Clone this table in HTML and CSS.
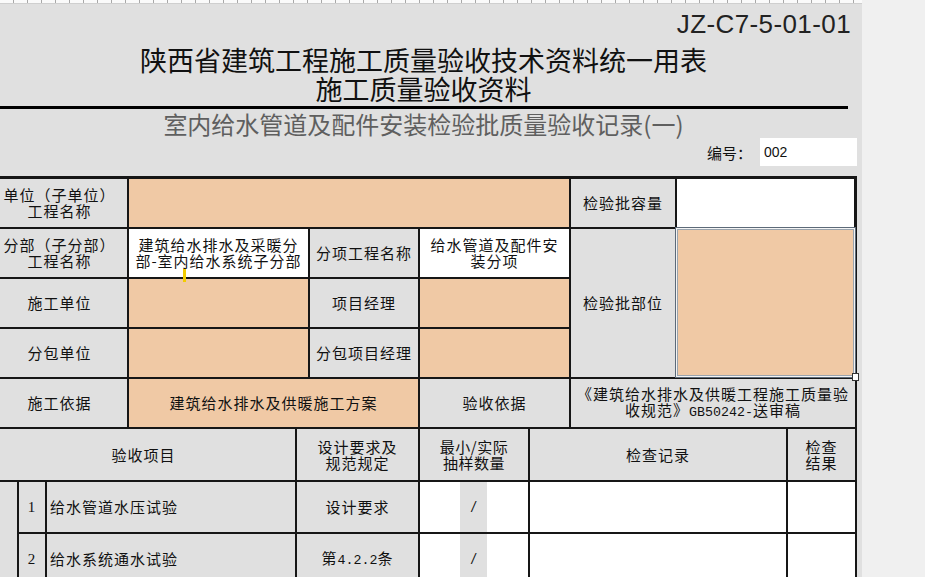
FILE: index.html
```html
<!DOCTYPE html>
<html lang="zh">
<head>
<meta charset="utf-8">
<title>室内给水管道及配件安装检验批质量验收记录</title>
<link rel="stylesheet" href="styles.css">
</head>
<body>
<div class="sheet">
  <div class="ruler"></div>
  <div class="head">
    <div class="code">JZ-C7-5-01-01</div>
    <div class="title"><div class="tl">陕西省建筑工程施工质量验收技术资料统一用表</div><div class="tl">施工质量验收资料</div></div>
    <div class="rule"></div>
    <div class="sub">室内给水管道及配件安装检验批质量验收记录(一)</div>
    <div class="no-row"><span class="no-label">编号：</span><span class="no-box">002</span></div>
  </div>
  <div class="form">
    <!-- row 1 -->
    <div class="c lbl r1 ca"><span class="t">单位（子单位）<br>工程名称</span></div>
    <div class="c org r1 cb1"></div>
    <div class="c lbl r1 c9"><span class="t">检验批容量</span></div>
    <div class="c wht r1 cf edge"></div>
    <!-- row 2 -->
    <div class="c lbl r2 ca"><span class="t">分部（子分部）<br>工程名称</span></div>
    <div class="c wht r2 cb on-top"><span class="t">建筑给水排水及采暖分<br>部-室内给水系统子分部</span><span class="caret"></span></div>
    <div class="c lbl r2 c6"><span class="t">分项工程名称</span></div>
    <div class="c wht r2 cd"><span class="t">给水管道及配件安<br>装分项</span></div>
    <div class="c lbl r2 c9 span3"><span class="t">检验批部位</span></div>
    <div class="c org r2 cf span3 sel"><span class="handle"></span></div>
    <!-- row 3 -->
    <div class="c lbl r3 ca"><span class="t">施工单位</span></div>
    <div class="c org r3 cb"></div>
    <div class="c lbl r3 c6"><span class="t">项目经理</span></div>
    <div class="c org r3 cd"></div>
    <!-- row 4 -->
    <div class="c lbl r4 ca"><span class="t">分包单位</span></div>
    <div class="c org r4 cb"></div>
    <div class="c lbl r4 c6"><span class="t">分包项目经理</span></div>
    <div class="c org r4 cd"></div>
    <!-- row 5 -->
    <div class="c lbl r5 ca"><span class="t">施工依据</span></div>
    <div class="c org r5 cb5"><span class="t">建筑给水排水及供暖施工方案</span></div>
    <div class="c lbl r5 cd"><span class="t">验收依据</span></div>
    <div class="c lbl r5 cd5"><span class="t">《建筑给水排水及供暖工程施工质量验<br>收规范》<span class="mono">GB50242-</span>送审稿</span></div>
    <!-- row 6 -->
    <div class="c lbl r6 ch1"><span class="t">验收项目</span></div>
    <div class="c lbl r6 ch2"><span class="t">设计要求及<br>规范规定</span></div>
    <div class="c lbl r6 c7"><span class="t tight">最小/实际<br>抽样数量</span></div>
    <div class="c lbl r6 ch4"><span class="t">检查记录</span></div>
    <div class="c lbl r6 c11"><span class="t">检查<br>结果</span></div>
    <!-- rows 7-8 -->
    <div class="c lbl r7 c1 span2"></div>
    <div class="c lbl r7 c2 num"><span class="t">1</span></div>
    <div class="c lbl r7 ci item"><span class="t">给水管道水压试验</span></div>
    <div class="c lbl r7 ch2"><span class="t">设计要求</span></div>
    <div class="c wht r7 c7"><span class="strip">/</span></div>
    <div class="c wht r7 ch4"></div>
    <div class="c wht r7 c11"></div>
    <div class="c lbl r8 c2 num"><span class="t">2</span></div>
    <div class="c lbl r8 ci item"><span class="t">给水系统通水试验</span></div>
    <div class="c lbl r8 ch2"><span class="t">第<span class="mono">4.2.2</span>条</span></div>
    <div class="c wht r8 c7"><span class="strip">/</span></div>
    <div class="c wht r8 ch4"></div>
    <div class="c wht r8 c11"></div>
  </div>
</div>
</body>
</html>
```

FILE: styles.css
```css
html, body {
  margin: 0;
  padding: 0;
  height: 100%;
}
body {
  background: #f0f0f0;
  font-family: "Noto Sans CJK SC", sans-serif;
  overflow: hidden;
  color: #111;
}
.sheet {
  width: 872px;
  height: 577px;
  margin-left: -10px;
  background: #e0e0e0;
}
.ruler {
  height: 3px;
  margin-left: 10px;
  background: repeating-linear-gradient(90deg, #fafafa 0 13px, #a8a8a8 13px 14px);
  border-bottom: 1px solid #cfcfcf;
}
.head {
  width: 867px;
}
.code {
  margin-top: 5px;
  text-align: right;
  padding-right: 6px;
  font-family: "Liberation Sans", sans-serif;
  font-size: 26px;
  line-height: 30px;
  letter-spacing: 0.4px;
  color: #222;
}
.title {
  margin-top: 6px;
  text-align: center;
  font-size: 27px;
  color: #111;
}
.tl {
  height: 29px;
  line-height: 29px;
}
.rule {
  margin-top: 3px;
  margin-left: 10px;
  width: 848px;
  height: 3px;
  background: #000;
}
.sub {
  margin-top: 1px;
  text-align: center;
  font-size: 24px;
  line-height: 28px;
  color: #5f5f5f;
}
.no-row {
  display: flex;
  justify-content: flex-end;
  align-items: center;
  height: 28px;
}
.no-label {
  font-size: 15px;
  margin-right: 8px;
  color: #111;
}
.no-box {
  width: 93px;
  height: 28px;
  padding-left: 4px;
  background: #fff;
  font-family: "Liberation Sans", sans-serif;
  font-size: 14px;
  line-height: 28px;
  color: #111;
}
.form {
  margin-top: 10px;
  width: 863px;
  padding: 3px 2px 0 2px;
  background: #161616;
  display: grid;
  grid-template-columns: 25px 26px 80px 166px 11px 108px 108px 39px 104px 109px 67px;
  grid-template-rows: 48px 48px 48px 48px 48px 51px 50px 50px;
  gap: 2px;
}
.c {
  display: flex;
  align-items: center;
  justify-content: center;
  text-align: center;
  font-size: 15px;
  line-height: 16px;
  letter-spacing: 1px;
  color: #111;
  position: relative;
}
.t {
  display: block;
}
.tight {
  letter-spacing: 0.5px;
}
.lbl { background: #e0e0e0; }
.org { background: #f0c9a5; }
.wht { background: #fff; }
.edge { box-shadow: inset -1px 0 0 #161616; }
.on-top { z-index: 2; }

.r1 { grid-row: 1; }
.r2 { grid-row: 2; }
.r3 { grid-row: 3; }
.r4 { grid-row: 4; }
.r5 { grid-row: 5; }
.r6 { grid-row: 6; }
.r7 { grid-row: 7; }
.r8 { grid-row: 8; }
.span2 { grid-row: 7 / span 2; }
.span3 { grid-row: 2 / span 3; }

.ca { grid-column: 1 / 4; }
.cb1 { grid-column: 4 / 9; }
.c9 { grid-column: 9; }
.cf { grid-column: 10 / 12; }
.cb { grid-column: 4 / 6; }
.c6 { grid-column: 6; }
.cd { grid-column: 7 / 9; }
.cb5 { grid-column: 4 / 7; }
.cd5 { grid-column: 9 / 12; }
.ch1 { grid-column: 1 / 5; }
.ch2 { grid-column: 5 / 7; }
.c7 { grid-column: 7; }
.ch4 { grid-column: 8 / 11; }
.c11 { grid-column: 11; }
.c1 { grid-column: 1; }
.c2 { grid-column: 2; }
.ci { grid-column: 3 / 5; }

.num {
  font-family: "Liberation Serif", serif;
  font-size: 15px;
}
.item {
  justify-content: flex-start;
  padding-left: 3px;
}
.mono {
  font-family: "Liberation Mono", monospace;
  font-size: 13.3px;
  letter-spacing: 0;
}
.strip {
  position: absolute;
  top: 0;
  bottom: 0;
  left: 40px;
  width: 27px;
  background: #e0e0e0;
  display: flex;
  align-items: center;
  justify-content: center;
  font-family: "Liberation Sans", sans-serif;
  font-style: italic;
  font-size: 14px;
  letter-spacing: 0;
}
.caret {
  position: absolute;
  left: 54px;
  top: 40px;
  width: 3px;
  height: 13px;
  background: #f2cc00;
}
.sel::before {
  content: "";
  position: absolute;
  left: -2px;
  top: -2px;
  right: -1px;
  bottom: -1px;
  border: 1px solid #5d6a78;
  box-shadow: inset 0 0 0 1px #f4f4f4, inset 0 0 0 2px #9aa4ae;
}
.handle {
  position: absolute;
  right: -4px;
  bottom: -4px;
  width: 5px;
  height: 6px;
  background: #fff;
  border: 1px solid #333;
  z-index: 2;
}
```
